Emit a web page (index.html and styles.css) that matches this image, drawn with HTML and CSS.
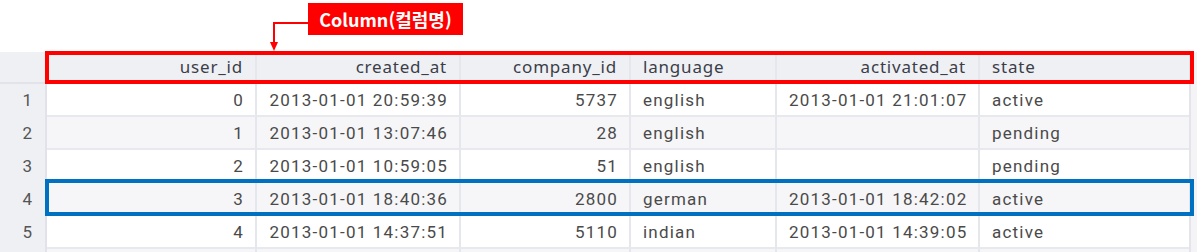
FILE: index.html
```html
<!DOCTYPE html>
<html lang="ko">
<head>
<meta charset="utf-8">
<title>users table</title>
<link rel="stylesheet" href="styles.css">
</head>
<body>
<div class="page">
  <div class="topbar">
    <svg class="arrow" width="50" height="40" viewBox="0 0 50 40">
      <path d="M40 3 H5 V22" fill="none" stroke="#ff0000" stroke-width="2"/>
      <path d="M1 22 H9 L5 31 Z" fill="#ff0000"/>
    </svg>
    <div class="label">Column(컬럼명)</div>
  </div>
  <div class="gridwrap">
    <div class="grid">
      <div class="row head">
        <div class="cell idx"></div>
        <div class="cell r">user_id</div>
        <div class="cell r">created_at</div>
        <div class="cell r">company_id</div>
        <div class="cell">language</div>
        <div class="cell r">activated_at</div>
        <div class="cell">state</div>
      </div>
      <div class="row">
        <div class="cell idx">1</div>
        <div class="cell r">0</div>
        <div class="cell r">2013-01-01 20:59:39</div>
        <div class="cell r">5737</div>
        <div class="cell">english</div>
        <div class="cell r">2013-01-01 21:01:07</div>
        <div class="cell">active</div>
      </div>
      <div class="row alt">
        <div class="cell idx">2</div>
        <div class="cell r">1</div>
        <div class="cell r">2013-01-01 13:07:46</div>
        <div class="cell r">28</div>
        <div class="cell">english</div>
        <div class="cell r"></div>
        <div class="cell">pending</div>
      </div>
      <div class="row">
        <div class="cell idx">3</div>
        <div class="cell r">2</div>
        <div class="cell r">2013-01-01 10:59:05</div>
        <div class="cell r">51</div>
        <div class="cell">english</div>
        <div class="cell r"></div>
        <div class="cell">pending</div>
      </div>
      <div class="row alt">
        <div class="cell idx">4</div>
        <div class="cell r">3</div>
        <div class="cell r">2013-01-01 18:40:36</div>
        <div class="cell r">2800</div>
        <div class="cell">german</div>
        <div class="cell r">2013-01-01 18:42:02</div>
        <div class="cell">active</div>
      </div>
      <div class="row">
        <div class="cell idx">5</div>
        <div class="cell r">4</div>
        <div class="cell r">2013-01-01 14:37:51</div>
        <div class="cell r">5110</div>
        <div class="cell">indian</div>
        <div class="cell r">2013-01-01 14:39:05</div>
        <div class="cell">active</div>
      </div>
      <div class="row alt">
        <div class="cell idx"></div>
        <div class="cell r"></div>
        <div class="cell r"></div>
        <div class="cell r"></div>
        <div class="cell"></div>
        <div class="cell r"></div>
        <div class="cell"></div>
      </div>
    </div>
    <div class="scroll"></div>
    <div class="mark mark-head"></div>
    <div class="mark mark-row"></div>
  </div>
</div>
</body>
</html>
```

FILE: styles.css
```css
* { box-sizing: border-box; }
html, body { margin: 0; padding: 0; background: #ffffff; overflow: hidden; }
.page { width: 1197px; height: 252px; position: relative; overflow: hidden; }

.topbar {
  height: 52px;
  padding: 3px 0 0 308px;
  position: relative;
}
.label {
  width: 155px;
  height: 32px;
  background: #ff0000;
  color: #ffffff;
  font-family: "Noto Sans CJK KR", "Noto Sans", sans-serif;
  font-weight: 700;
  font-size: 18px;
  line-height: 32px;
  text-align: center;
}
.arrow {
  position: absolute;
  left: 269px;
  top: 20px;
}

.gridwrap {
  display: flex;
  position: relative;
}
.grid { width: 1189px; }
.scroll {
  width: 8px;
  background: #f4f4f7;
  border-left: 2px solid #e4e5eb;
}
.row {
  display: grid;
  grid-template-columns: 47px 210px 204px 170px 146px 203px 209px;
  height: 33px;
  background: #ffffff;
}
.row.alt { background: #f6f6f8; }
.row.head { background: #eff0f4; height: 32px; }

.cell {
  padding: 0 12px;
  border-right: 2px solid #e6e7ed;
  border-bottom: 2px solid #e8e9ee;
  font-family: Roboto, "Liberation Sans", sans-serif;
  font-size: 17px;
  letter-spacing: 1.2px;
  color: #4a4a4a;
  line-height: 32px;
  white-space: nowrap;
  overflow: hidden;
}
.cell:last-child { border-right: none; }
.cell.r { text-align: right; padding-right: 11px; }
.cell.idx {
  background: #eff0f4;
  border-bottom: none;
  border-right: 2px solid #e2e3ea;
  text-align: right;
  padding-right: 13px;
  color: #555555;
  letter-spacing: 0;
}
.head .cell {
  font-family: "Noto Sans", "Open Sans", sans-serif;
  font-size: 17px;
  color: #3b3e48;
  letter-spacing: 0.8px;
  line-height: 30px;
  border-bottom: 2px solid #e2e3e9;
}
.head .cell.r { padding-right: 12px; }

.mark {
  position: absolute;
  left: 45px;
  width: 1149px;
  border: 4px solid;
}
.mark-head { top: -1px; height: 33px; border-color: #ff0000; }
.mark-row { top: 127px; height: 37px; border-color: #0070c0; }
```
